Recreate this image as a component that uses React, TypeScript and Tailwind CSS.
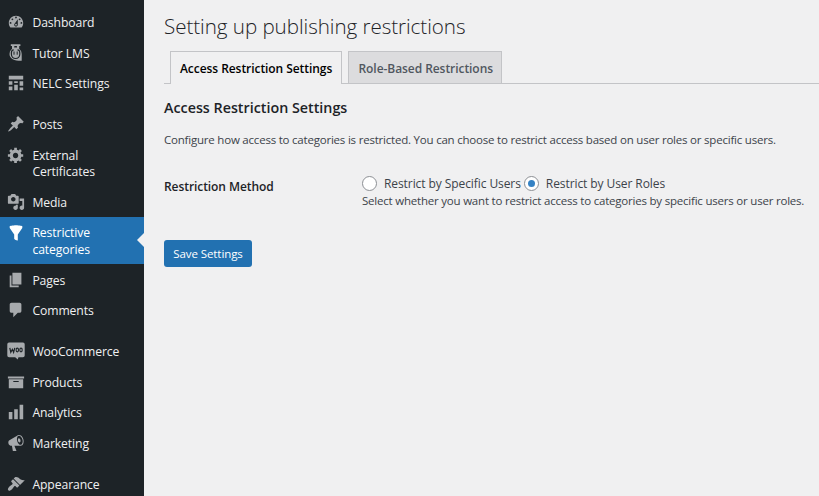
import type { ReactNode } from "react";

const paths = {
  dashboard:
    "M3.76 16h12.48c1.1-1.37 1.76-3.11 1.76-5 0-4.42-3.58-8-8-8s-8 3.58-8 8c0 1.89.66 3.63 1.76 5zM10 4c.55 0 1 .45 1 1s-.45 1-1 1-1-.45-1-1 .45-1 1-1zM6 6c.55 0 1 .45 1 1s-.45 1-1 1-1-.45-1-1 .45-1 1-1zm8 0c.55 0 1 .45 1 1s-.45 1-1 1-1-.45-1-1 .45-1 1-1zm-5.37 5.55L12 7v6c0 1.1-.9 2-2 2s-2-.9-2-2c0-.57.24-1.08.63-1.45zM4 10c.55 0 1 .45 1 1s-.45 1-1 1-1-.45-1-1 .45-1 1-1zm12 0c.55 0 1 .45 1 1s-.45 1-1 1-1-.45-1-1 .45-1 1-1zm-5 3c0-.55-.45-1-1-1s-1 .45-1 1 .45 1 1 1 1-.45 1-1z",
  schedule: "M2 2h16v4H2V2zm0 10V8h4v4H2zm6-2V8h4v2H8zm6 3V8h4v5h-4zm-6 5v-6h4v6H8zm-6 0v-4h4v4H2zm12 0v-3h4v3h-4z",
  post: "M10.44 3.02l1.82-1.82 6.36 6.35-1.83 1.82c-1.05-.68-2.48-.57-3.41.36l-.75.75c-.92.93-1.04 2.35-.35 3.41l-1.83 1.82-2.41-2.41-2.8 2.79c-.42.42-3.38 2.71-3.8 2.29s1.86-3.39 2.28-3.81l2.79-2.79L4.1 9.36l1.83-1.82c1.05.69 2.48.57 3.4-.36l.75-.75c.93-.92 1.05-2.35.36-3.41z",
  generic:
    "M18 12h-2.18c-.17.7-.44 1.35-.81 1.93l1.54 1.54-2.1 2.1-1.54-1.54c-.58.36-1.23.63-1.91.79V19H8v-2.18c-.68-.16-1.33-.43-1.91-.79l-1.54 1.54-2.12-2.12 1.54-1.54c-.36-.58-.63-1.23-.79-1.91H1V9.03h2.17c.16-.7.44-1.35.8-1.94L2.43 5.55l2.1-2.1 1.54 1.54c.58-.37 1.24-.64 1.93-.81V2h3v2.18c.68.16 1.33.43 1.91.79l1.54-1.54 2.12 2.12-1.54 1.54c.36.59.64 1.24.8 1.94H18V12zm-8.5 1.5c1.66 0 3-1.34 3-3s-1.34-3-3-3-3 1.34-3 3 1.34 3 3 3z",
  media:
    "M13 11V4c0-.55-.45-1-1-1h-1.67L9 1H5L3.67 3H2c-.55 0-1 .45-1 1v7c0 .55.45 1 1 1h10c.55 0 1-.45 1-1zM7 4.5c1.38 0 2.5 1.12 2.5 2.5S8.38 9.5 7 9.5 4.5 8.38 4.5 7 5.62 4.5 7 4.5zM14 6h5v10.5c0 1.38-1.12 2.5-2.5 2.5S14 17.88 14 16.5s1.12-2.5 2.5-2.5c.17 0 .34.02.5.05V9h-3V6zm-4 8.05V13h2v3.5c0 1.38-1.12 2.5-2.5 2.5S7 17.88 7 16.5 8.12 14 9.5 14c.17 0 .34.02.5.05z",
  filter: "M3 4.5v-2s3.34-1 7-1 7 1 7 1v2l-5 7.03v6.97s-1.22-.09-2.25-.59S8 16.5 8 16.5v-4.97z",
  page: "M6 15V2h10v13H6zm-1 1h8v2H3V5h2v11z",
  comments: "M5 2h9c1.1 0 2 .9 2 2v7c0 1.1-.9 2-2 2h-2l-5 5v-5H5c-1.1 0-2-.9-2-2V4c0-1.1.9-2 2-2z",
  archive: "M19 4v2H1V4h18zM2 7h16v10H2V7zm11 3V9H7v1h6z",
  chart: "M18 18V2h-4v16h4zm-6 0V7H8v11h4zm-6 0v-8H2v8h4z",
  megaphone:
    "M18.15 5.94c.46 1.62.38 3.22-.02 4.48-.42 1.28-1.26 2.18-2.3 2.48-.16.06-.26.06-.4.06-.06.02-.12.02-.18.02-.06.02-.14.02-.22.02h-6.8l2.22 5.5c.02.14-.06.26-.14.34-.08.1-.24.16-.34.16H6.95c-.1 0-.26-.06-.34-.16-.08-.08-.16-.2-.14-.34l-1-5.5H4.25l-.02-.02c-.5.06-1.08-.18-1.54-.62s-.88-1.08-1.06-1.88c-.24-.8-.2-1.56-.02-2.2.18-.62.58-1.08 1.06-1.3l.02-.02 9-5.4c.1-.06.18-.1.24-.16.06-.04.14-.08.24-.12.16-.08.28-.12.5-.18 1.04-.3 2.24.1 3.22.98s1.84 2.24 2.26 3.86zm-2.58 5.98h-.02c.4-.1.74-.34 1.04-.7.58-.7.86-1.76.86-3.04 0-.64-.1-1.3-.28-1.98-.34-1.36-1.02-2.5-1.78-3.24s-1.68-1.1-2.46-.88c-.82.22-1.4.96-1.7 2-.32 1.04-.28 2.36.06 3.72.38 1.36 1 2.5 1.8 3.24.78.74 1.62 1.1 2.48.88zm-2.54-7.08c.22-.04.42-.02.62.04.38.16.76.48 1.02 1s.42 1.2.42 1.78c0 .3-.04.56-.12.8-.18.48-.44.84-.86.94-.34.1-.8-.06-1.14-.4s-.64-.86-.78-1.5c-.18-.62-.12-1.24.02-1.72s.48-.84.82-.94z",
  appearance:
    "M14.48 11.06L7.41 3.99l1.5-1.5c.5-.56 2.3-.47 3.51.32 1.21.8 1.43 1.28 2.91 2.1 1.18.64 2.45 1.26 4.45.85zm-.71.71L6.7 4.7 4.93 6.47c-.39.39-.39 1.02 0 1.41l1.06 1.06c.39.39.39 1.03 0 1.42-.6.6-1.43 1.11-2.21 1.69-.35.26-.7.53-1.01.84C1.43 14.23.4 16.08 1.4 17.07c.99 1 2.84-.03 4.18-1.36.31-.31.58-.66.85-1.02.57-.78 1.08-1.61 1.69-2.21.39-.39 1.02-.39 1.41 0l1.06 1.06c.39.39 1.02.39 1.41 0z",
};

function Icon({ name }: { name: keyof typeof paths }) {
  return (
    <svg viewBox="0 0 20 20" className="size-[18px]" fill="currentColor">
      <path d={paths[name]} />
    </svg>
  );
}

function TutorIcon() {
  return (
    <svg viewBox="0 0 18 18" className="size-[18px]" fill="none">
      <path d="M3.8.2h9.6v1.8h-1.2v3.2H5V2H3.8z" fill="currentColor" />
      <path d="M7.3 2h2.6v1.6H7.3z" fill="#1d2327" />
      <path d="M8.6 3.8a6.1 6.1 0 0 1 6.1 6.1v6.9C8 17 2.5 14.8 2.5 9.9a6.1 6.1 0 0 1 6.1-6.1z" fill="currentColor" />
      <path d="M6.7 5.9c-1.4.1-2.3 1.2-2.3 2.8v1.6a4.2 4.2 0 0 0 8.4 0V8.7c0-1.6-.9-2.7-2.3-2.8" stroke="#1d2327" strokeWidth="1.2" />
      <path d="M7 7.5v3.2M10.2 7.5v3.2" stroke="#1d2327" strokeWidth="1" />
    </svg>
  );
}

function WooIcon() {
  return (
    <svg viewBox="0 0 18 18" className="size-[18px]">
      <path d="M2 .5h14a1.7 1.7 0 0 1 1.7 1.7v11.3a1.7 1.7 0 0 1-1.7 1.7h-4.5l-.8 2.3-2.5-2.3H2A1.7 1.7 0 0 1 .3 13.500V2.200A1.7 1.7 0 0 1 2 .5z" fill="currentColor" />
      <path d="M2.8 5.8l1 4.5 1.6-3 1.2 3 1.2-4.5" fill="none" stroke="#1d2327" strokeWidth="1.2" />
      <ellipse cx="10.3" cy="8" rx="1.2" ry="1.9" fill="none" stroke="#1d2327" strokeWidth="1.1" />
      <ellipse cx="14" cy="8" rx="1.2" ry="1.9" fill="none" stroke="#1d2327" strokeWidth="1.1" />
    </svg>
  );
}

function Item({ icon, children, active = false }: { icon: ReactNode; children: ReactNode; active?: boolean }) {
  return (
    <a className={active ? "relative flex bg-[#2271b1] text-white" : "relative flex text-[#f0f0f1]"}>
      <span
        className={
          active
            ? "flex w-[32.4px] shrink-0 justify-center pt-[6.8px]"
            : "flex w-[32.4px] shrink-0 justify-center pt-[6.3px] text-[#a7aaad]"
        }
      >
        {icon}
      </span>
      <span className="pt-[8.4px] pb-[5.8px] text-[12.2px] leading-[16.4px] tracking-[-0.1px]">{children}</span>
      {active && (
        <span className="absolute top-1/2 right-0 -mt-[7.2px] border-[7.2px] border-transparent border-r-[#f0f0f1]" />
      )}
    </a>
  );
}

function Radio({ checked, label }: { checked?: boolean; label: string }) {
  return (
    <label className="flex items-center">
      <span className="mr-[7px] flex size-[15px] items-center justify-center rounded-full border border-[#8c8f94] bg-white">
        {checked && <span className="size-[7px] rounded-full bg-[#3582c4]" />}
      </span>
      {label}
    </label>
  );
}

export default function App() {
  return (
    <div className="flex h-[496px] w-[819px] overflow-hidden bg-[#f0f0f1] font-['Open_Sans','Noto_Sans',sans-serif] text-[#3c434a]">
      <nav className="w-36 shrink-0 bg-[#1d2327] pt-[6.8px]">
        <Item icon={<Icon name="dashboard" />}>Dashboard</Item>
        <Item icon={<TutorIcon />}>Tutor LMS</Item>
        <Item icon={<Icon name="schedule" />}>NELC Settings</Item>
        <div className="h-[10.2px]" />
        <Item icon={<Icon name="post" />}>Posts</Item>
        <Item icon={<Icon name="generic" />}>
          External
          <br />
          Certificates
        </Item>
        <Item icon={<Icon name="media" />}>Media</Item>
        <Item icon={<Icon name="filter" />} active>
          Restrictive
          <br />
          categories
        </Item>
        <div className="h-[0.3px]" />
        <Item icon={<Icon name="page" />}>Pages</Item>
        <Item icon={<Icon name="comments" />}>Comments</Item>
        <div className="h-[10.2px]" />
        <Item icon={<WooIcon />}>WooCommerce</Item>
        <Item icon={<Icon name="archive" />}>Products</Item>
        <Item icon={<Icon name="chart" />}>Analytics</Item>
        <Item icon={<Icon name="megaphone" />}>Marketing</Item>
        <div className="h-[10.5px]" />
        <Item icon={<Icon name="appearance" />}>Appearance</Item>
      </nav>
      <main className="min-w-0 flex-1 pl-5 whitespace-nowrap">
        <h1 className="pt-[13px] text-[20.6px] leading-[27px] font-light tracking-[-0.05px] text-[#1d2327]">
          Setting up publishing restrictions
        </h1>
        <div className="mt-[11px] flex h-[33px] gap-1.5 border-b border-[#c3c4c7] pl-1.5 text-[12px] leading-[21px] font-semibold tracking-[-0.06px]">
          <div className="h-[33px] w-[172px] border border-b-0 border-[#c3c4c7] bg-[#f0f0f1] pt-[6px] pl-[9px] text-black">
            Access Restriction Settings
          </div>
          <div className="h-[32px] w-[154px] border border-b-0 border-[#c3c4c7] bg-[#dcdcde] pt-[6px] pl-[9.5px] text-[#50575e]">
            Role-Based Restrictions
          </div>
        </div>
        <h2 className="mt-[14px] text-[14.3px] leading-5 font-semibold text-[#1d2327]">Access Restriction Settings</h2>
        <p className="mt-[13px] text-[11.5px] leading-[18px] tracking-[-0.21px]">
          Configure how access to categories is restricted. You can choose to restrict access based on user roles or
          specific users.
        </p>
        <div className="mt-[26px] flex">
          <div className="w-[198px] shrink-0 pt-1 text-[12px] leading-4 font-semibold tracking-[-0.07px] text-[#1d2327]">
            Restriction Method
          </div>
          <div>
            <div className="flex h-[17px] items-center gap-[3px] text-[12px] tracking-[-0.08px]">
              <Radio label="Restrict by Specific Users" />
              <Radio checked label="Restrict by User Roles" />
            </div>
            <p className="text-[11.5px] leading-[17px] tracking-[-0.21px]">
              Select whether you want to restrict access to categories by specific users or user roles.
            </p>
          </div>
        </div>
        <button className="mt-[31px] block h-[27px] w-[88px] rounded-[3px] bg-[#2271b1] text-[11.5px] leading-[27px] tracking-[-0.08px] text-white">
          Save Settings
        </button>
      </main>
    </div>
  );
}
